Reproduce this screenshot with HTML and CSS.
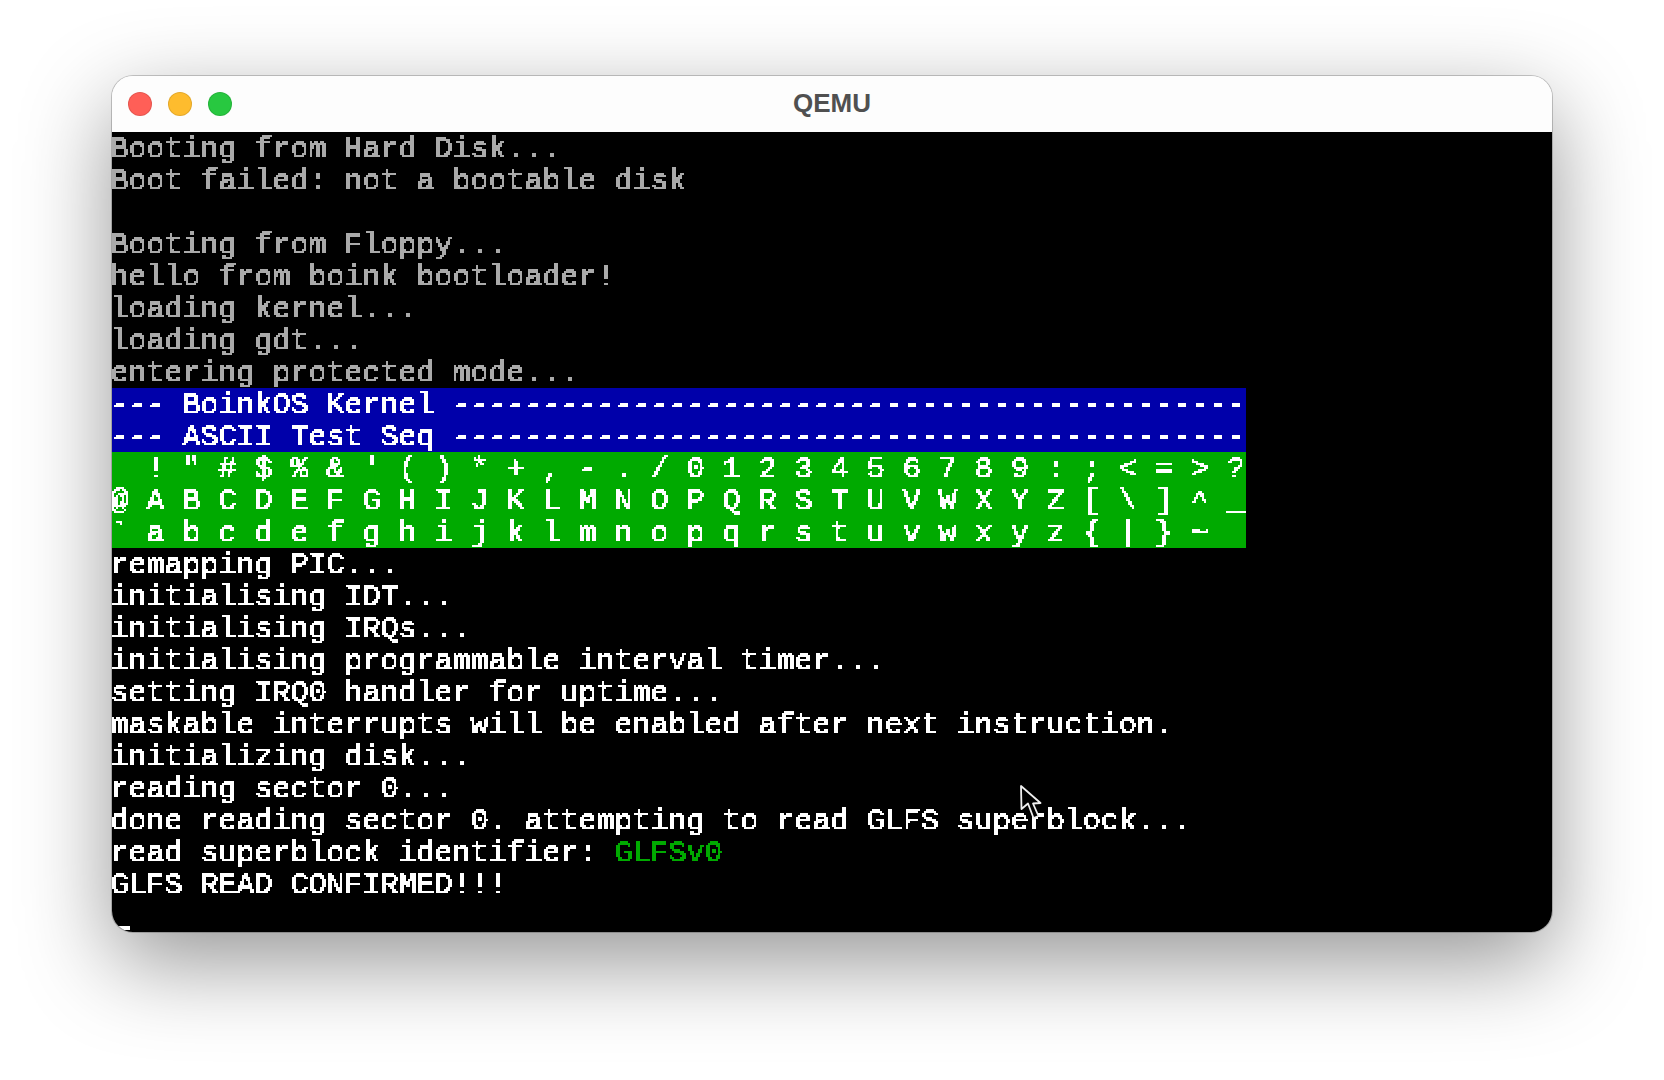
FILE: index.html
```html
<!DOCTYPE html>
<html lang="en">
<head>
<meta charset="utf-8">
<title>QEMU</title>
<link rel="stylesheet" href="styles.css">
</head>
<body>
<svg class="defs" width="0" height="0" aria-hidden="true">
  <filter id="crisp" color-interpolation-filters="sRGB" x="0" y="0" width="100%" height="100%">
    <feComponentTransfer in="SourceGraphic" result="hard"><feFuncA type="discrete" tableValues="0 1 1"/></feComponentTransfer>
    <feFlood x="0" y="0" width="1" height="1" flood-color="#000"/>
    <feComposite width="2" height="2"/>
    <feTile result="grid"/>
    <feComposite in="hard" in2="grid" operator="in"/>
    <feConvolveMatrix order="2" kernelMatrix="1 1 1 1" divisor="1" targetX="0" targetY="0" preserveAlpha="false" edgeMode="none"/>
  </filter>
</svg>
<main class="window">
  <header class="titlebar">
    <div class="lights">
      <span class="light red"></span>
      <span class="light yellow"></span>
      <span class="light green"></span>
    </div>
    <h1 class="title">QEMU</h1>
  </header>
  <section class="screen">
    <div class="row gray"><span class="t">Booting from Hard Disk...</span></div>
    <div class="row gray"><span class="t">Boot failed: not a bootable disk</span></div>
    <div class="row gray"></div>
    <div class="row gray"><span class="t">Booting from Floppy...</span></div>
    <div class="row gray"><span class="t">hello from boink bootloader!</span></div>
    <div class="row gray"><span class="t">loading kernel...</span></div>
    <div class="row gray"><span class="t">loading gdt...</span></div>
    <div class="row gray"><span class="t">entering protected mode...</span></div>
    <div class="row bar blue"><span class="t">--- BoinkOS Kernel --------------------------------------------</span></div>
    <div class="row bar blue"><span class="t">--- ASCII Test Seq --------------------------------------------</span></div>
    <div class="row bar lime"><span class="t">  ! &quot; # $ % &amp; ' ( ) * + , - . / 0 1 2 3 4 5 6 7 8 9 : ; &lt; = &gt; ?</span></div>
    <div class="row bar lime"><span class="t">@ A B C D E F G H I J K L M N O P Q R S T U V W X Y Z [ \ ] ^ _</span></div>
    <div class="row bar lime"><span class="t">` a b c d e f g h i j k l m n o p q r s t u v w x y z { | } ~</span></div>
    <div class="row"><span class="t">remapping PIC...</span></div>
    <div class="row"><span class="t">initialising IDT...</span></div>
    <div class="row"><span class="t">initialising IRQs...</span></div>
    <div class="row"><span class="t">initialising programmable interval timer...</span></div>
    <div class="row"><span class="t">setting IRQ0 handler for uptime...</span></div>
    <div class="row"><span class="t">maskable interrupts will be enabled after next instruction.</span></div>
    <div class="row"><span class="t">initializing disk...</span></div>
    <div class="row"><span class="t">reading sector 0...</span></div>
    <div class="row"><span class="t">done reading sector 0. attempting to read GLFS superblock...</span></div>
    <div class="row"><span class="t">read superblock identifier: <span class="ok">GLFSv0</span></span></div>
    <div class="row"><span class="t">GLFS READ CONFIRMED!!!</span></div>
    <div class="row cursor-row"><span class="cursor"></span></div>
    <svg class="pointer" width="24" height="38" viewBox="0 0 24 38" aria-hidden="true">
      <path d="M2 2 L2.5 25 L9 19.5 L14.5 34 L19.5 32 L14 19.5 L21.5 19 Z" fill="#000" stroke="#eee" stroke-width="1.8" stroke-linejoin="round"/>
    </svg>
  </section>
</main>
</body>
</html>
```
FILE: styles.css
```css
* { box-sizing: border-box; }

html, body {
  margin: 0;
  height: 100%;
  background: #fff;
  overflow: hidden;
}

body {
  display: flex;
  flex-direction: column;
  align-items: center;
  padding-top: 76px;
}

.defs { position: absolute; }

.window {
  width: 1440px;
  height: 856px;
  display: flex;
  flex-direction: column;
  border-radius: 21px;
  overflow: hidden;
  box-shadow: 0 0 0 1px rgba(0, 0, 0, .2), 0 30px 90px rgba(0, 0, 0, .42);
}

.titlebar {
  position: relative;
  flex: 0 0 56px;
  display: flex;
  align-items: center;
  justify-content: center;
  padding-bottom: 2px;
  background: #fdfdfd;
}

.lights {
  position: absolute;
  left: 16px;
  top: 16px;
  display: flex;
  gap: 16px;
}

.light {
  width: 24px;
  height: 24px;
  border-radius: 50%;
  border: 1px solid rgba(0, 0, 0, .1);
}

.red { background: #ff5f57; }
.yellow { background: #febc2e; }
.green { background: #28c840; }

.title {
  margin: 0;
  font: 700 26px/1 "Liberation Sans", Arial, sans-serif;
  color: #505050;
}

.screen {
  position: relative;
  flex: 1;
  background: #000;
  color: #fff;
  font: 400 30px/32px "Liberation Mono", "Courier New", monospace;
  -webkit-text-stroke: .5px currentColor;
}

.row {
  height: 32px;
}

.t {
  display: inline-block;
  white-space: pre;
  vertical-align: top;
  margin: 2px 0 0 -1px;
  filter: url(#crisp);
}

.gray { color: #aaa; }
.bar { width: 1134px; }
.blue { background: #0000aa; }
.lime { background: #00aa00; }
.ok { color: #00aa00; }

.cursor-row {
  display: flex;
  align-items: flex-end;
  padding-bottom: 2px;
}

.cursor {
  width: 18px;
  height: 4px;
  background: #fff;
}

.pointer {
  position: absolute;
  left: 907px;
  top: 652px;
}
```
